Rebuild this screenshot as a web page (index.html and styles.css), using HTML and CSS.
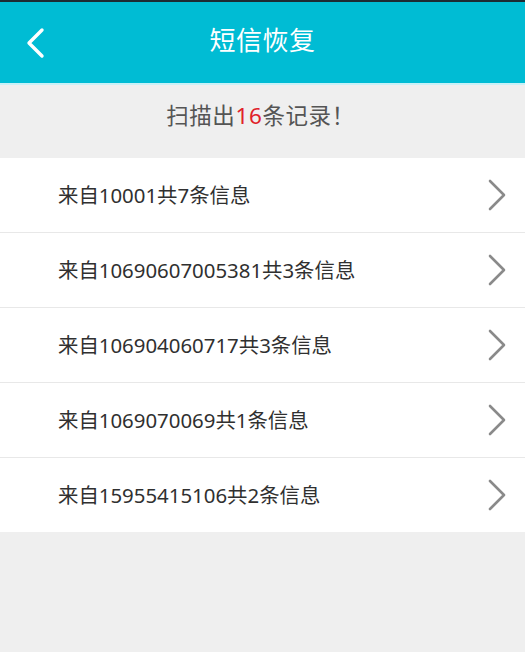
FILE: index.html
```html
<!DOCTYPE html>
<html lang="zh-CN">
<head>
<meta charset="utf-8">
<title>短信恢复</title>
<link rel="stylesheet" href="styles.css">
</head>
<body>
<div class="app">
  <header class="topbar">
    <button class="back" aria-label="返回">
      <svg width="22" height="32" viewBox="0 0 22 32"><polyline points="17,3 4,16 17,29" fill="none" stroke="#fff" stroke-width="3.4" stroke-linecap="round" stroke-linejoin="round"/></svg>
    </button>
    <h1 class="title">短信恢复</h1>
  </header>
  <div class="summary">扫描出<span class="count">16</span>条记录！</div>
  <ul class="list">
    <li class="row"><span class="label">来自10001共7条信息</span><svg class="chev" width="20" height="32" viewBox="0 0 20 32"><polyline points="3,2 17,16 3,30" fill="none" stroke="#8a8a8a" stroke-width="2.6" stroke-linecap="round" stroke-linejoin="round"/></svg></li>
    <li class="row"><span class="label">来自10690607005381共3条信息</span><svg class="chev" width="20" height="32" viewBox="0 0 20 32"><polyline points="3,2 17,16 3,30" fill="none" stroke="#8a8a8a" stroke-width="2.6" stroke-linecap="round" stroke-linejoin="round"/></svg></li>
    <li class="row"><span class="label">来自106904060717共3条信息</span><svg class="chev" width="20" height="32" viewBox="0 0 20 32"><polyline points="3,2 17,16 3,30" fill="none" stroke="#8a8a8a" stroke-width="2.6" stroke-linecap="round" stroke-linejoin="round"/></svg></li>
    <li class="row"><span class="label">来自1069070069共1条信息</span><svg class="chev" width="20" height="32" viewBox="0 0 20 32"><polyline points="3,2 17,16 3,30" fill="none" stroke="#8a8a8a" stroke-width="2.6" stroke-linecap="round" stroke-linejoin="round"/></svg></li>
    <li class="row"><span class="label">来自15955415106共2条信息</span><svg class="chev" width="20" height="32" viewBox="0 0 20 32"><polyline points="3,2 17,16 3,30" fill="none" stroke="#8a8a8a" stroke-width="2.6" stroke-linecap="round" stroke-linejoin="round"/></svg></li>
  </ul>
</div>
</body>
</html>
```

FILE: styles.css
```css
* { box-sizing: border-box; }
html, body {
  margin: 0;
  padding: 0;
  height: 100%;
}
body {
  background: #efefef;
  font-family: "Noto Sans", "Noto Sans CJK SC", sans-serif;
}
.app {
  width: 525px;
  min-height: 652px;
  background: #efefef;
}
.topbar {
  position: relative;
  height: 85px;
  background: #00bcd4;
  border-top: 2px solid #1d2b33;
  border-bottom: 2px solid #c9f1f7;
  display: flex;
  align-items: center;
  justify-content: center;
}
.back {
  position: absolute;
  left: 25px;
  top: 25px;
  padding: 0;
  border: 0;
  background: none;
  display: flex;
}
.title {
  margin: 0 0 3px 0;
  font-size: 26px;
  font-weight: normal;
  color: #ffffff;
  letter-spacing: 0.5px;
  line-height: 1.2;
}
.summary {
  height: 73px;
  display: flex;
  align-items: center;
  justify-content: center;
  font-size: 22.5px;
  letter-spacing: 0.6px;
  line-height: 1.2;
  color: #555555;
  padding: 0 0 12px 0;
  margin-left: -4px;
}
.count {
  color: #e0222a;
}
.list {
  list-style: none;
  margin: 0;
  padding: 0;
  background: #ffffff;
}
.row {
  height: 75px;
  display: flex;
  align-items: center;
  justify-content: space-between;
  padding: 0 18px 0 58px;
  border-bottom: 1px solid #e8e8e8;
}
.row:last-child {
  height: 74px;
  border-bottom: 0;
}
.label {
  font-size: 20.4px;
  line-height: 1.2;
  color: #303030;
}
.chev {
  display: block;
}
```
